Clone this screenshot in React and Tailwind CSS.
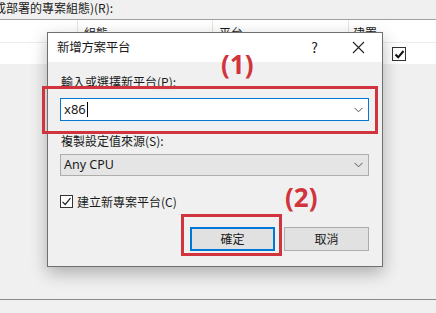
import React from 'react';

const font = "font-['Noto_Sans_CJK_TC','Noto_Sans',sans-serif]";

const Chevron = () => (
    <svg width="9" height="6" viewBox="0 0 9 6" className="shrink-0">
        <polyline points="0.5,0.8 4.5,4.8 8.5,0.8" fill="none" stroke="#555" strokeWidth="1" />
    </svg>
);

const CheckMark = ({ bold }) => (
    <svg width="11" height="11" viewBox="0 0 11 11">
        <polyline
            points={bold ? '1.5,5.5 4.2,8.3 9.5,2' : '1.5,5.8 4.2,8.5 9.5,2.2'}
            fill="none"
            stroke={bold ? '#111' : '#222'}
            strokeWidth={bold ? 2 : 1.2}
        />
    </svg>
);

const App = () => {
    return (
        <div className={`relative w-[436px] h-[313px] overflow-hidden bg-[#f0f0f0] text-[12px] text-[#1a1a1a] ${font}`}>
            {/* page behind the dialog */}
            <div className="h-[19px] leading-[14px] pt-[1px] -ml-[6px] whitespace-nowrap">成部署的專案組態)(R):</div>
            <div className="border-t border-[#a0a0a0] bg-white">
                <div className="flex h-[23px] border-b border-[#ececec]">
                    <div className="w-[78px] border-r border-[#e5e5e5]"></div>
                    <div className="w-[135px] border-r border-[#e5e5e5] pl-[6px] pt-[4px]">組態</div>
                    <div className="w-[136px] border-r border-[#e5e5e5] pl-[6px] pt-[4px]">平台</div>
                    <div className="flex-1 pl-[4px] pt-[4px]">建置</div>
                </div>
                <div className="flex h-[21px] items-start">
                    <div className="ml-[392px] mt-[4px] w-[14px] h-[14px] border border-[#333] bg-white flex items-center justify-center">
                        <CheckMark bold />
                    </div>
                </div>
            </div>
            <div className="mt-[235px] border-t border-[#8a8a8a]"></div>

            {/* dialog */}
            <div className="absolute left-[47px] top-[32px] w-[336px] h-[235px] border border-[#6f6f6f] bg-[#f0f0f0] shadow-[0_6px_16px_rgba(0,0,0,0.28)] flex flex-col">
                <div className="h-[29px] bg-white flex items-center pl-[9px] shrink-0">
                    <span className="text-[12.5px] tracking-[-0.3px]">新增方案平台</span>
                    <span className="ml-auto mr-[34px] text-[14px] text-[#222]">?</span>
                    <svg width="13" height="13" viewBox="0 0 13 13" className="mr-[17px]">
                        <path d="M1 1 L12 12 M12 1 L1 12" stroke="#222" strokeWidth="1.1" />
                    </svg>
                </div>

                <div className="flex flex-col pl-[12px] pr-[13px]">
                    <div className="mt-[13px] h-[14px] leading-[14px] pl-[1px]">輸入或選擇新平台(P):</div>
                    <div className="-mt-[3px] -ml-[18px] -mr-[9px] border-[3px] border-[#d1343c] pl-[15px] pr-[6px] pt-[9px] pb-[10px]">
                        <div className="h-[23px] border border-[#0078d7] bg-white flex items-center pl-[3px] pr-[5px]">
                            <span className="text-[13px] font-['Noto_Sans',sans-serif] leading-none">x86</span>
                            <span className="w-px h-[15px] bg-black ml-[1px]"></span>
                            <span className="ml-auto"><Chevron /></span>
                        </div>
                    </div>
                    <div className="h-[14px] leading-[14px] pl-[1px]">複製設定值來源(S):</div>
                    <div className="mt-[6px] h-[22px] border border-[#adadad] bg-[#e5e5e5] flex items-center pl-[3px] pr-[5px]">
                        <span className="text-[12.5px] font-['Noto_Sans',sans-serif] leading-none">Any CPU</span>
                        <span className="ml-auto"><Chevron /></span>
                    </div>
                    <div className="mt-[19px] flex items-center h-[13px]">
                        <div className="w-[13px] h-[13px] border border-[#333] bg-white flex items-center justify-center">
                            <CheckMark />
                        </div>
                        <span className="ml-[4px]">建立新專案平台(C)</span>
                    </div>
                    <div className="mt-[6px] flex justify-end items-start">
                        <div className="border-[3px] border-[#d1343c] pl-[6px] pr-[4px] pt-[10px] pb-[2px]">
                            <button className="w-[85px] h-[24px] border-2 border-[#0078d7] bg-[#e1e1e1] flex items-center justify-center">確定</button>
                        </div>
                        <button className="ml-[2px] mt-[13px] w-[85px] h-[24px] border border-[#adadad] bg-[#e1e1e1] flex items-center justify-center">取消</button>
                    </div>
                </div>
            </div>

            {/* annotations */}
            <div className="absolute left-[221px] top-[48px] text-[26px] leading-[32px] font-bold text-[#d1343c] font-['Noto_Sans',sans-serif]">(1)</div>
            <div className="absolute left-[285px] top-[181px] text-[26px] leading-[32px] font-bold text-[#d1343c] font-['Noto_Sans',sans-serif]">(2)</div>
        </div>
    );
};

export default App;
